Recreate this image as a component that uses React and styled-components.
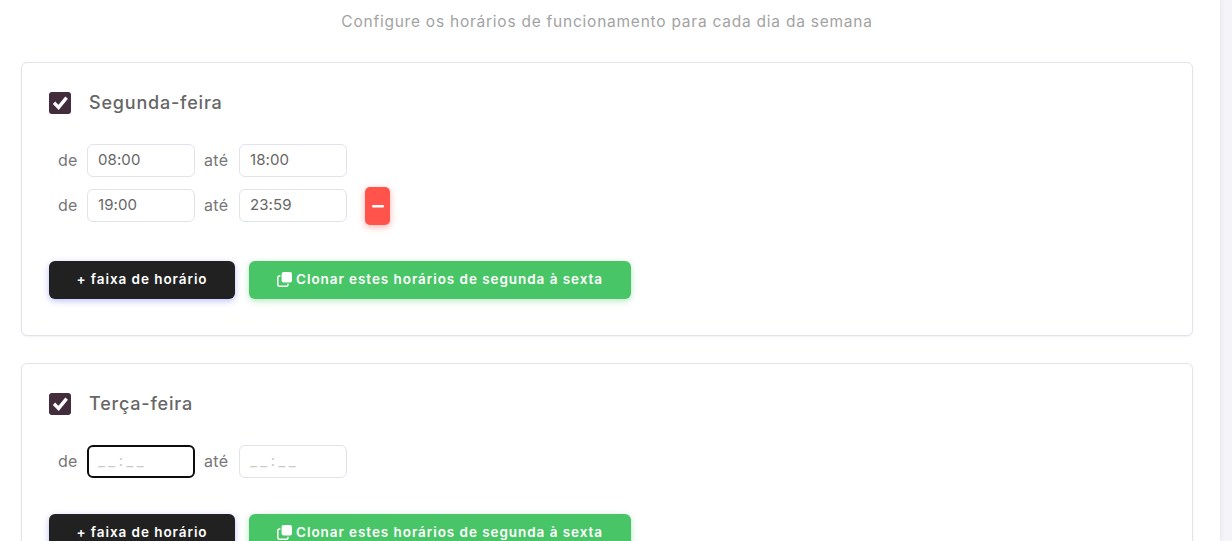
import React from "react";
import styled, { createGlobalStyle } from "styled-components";

const Global = createGlobalStyle`
  html, body { margin: 0; height: 541px; overflow: hidden; background: #f5f5f9; }
  body { font-family: "Inter", "Open Sans", "Liberation Sans", sans-serif; }
  * { box-sizing: border-box; }
`;

const Page = styled.div`
  width: 1221px;
  height: 541px;
  overflow: hidden;
  background: #fff;
  border-right: 1px solid #ebebf1;
  padding: 11px 27px 0 21px;
  box-shadow: 1px 0 3px rgba(230, 230, 238, 0.5);
`;

const Subtitle = styled.p`
  margin: 0 0 29px;
  height: 22px;
  line-height: 22px;
  text-align: center;
  font-size: 15.5px;
  letter-spacing: 0.76px;
  color: #a3a3a3;
`;

const Card = styled.section`
  width: 1172px;
  background: #fff;
  border: 1px solid #e4e3ea;
  border-radius: 6px;
  padding: 29px 27px 36px;
  margin-bottom: 27px;
  box-shadow: 0 1px 2px rgba(225, 225, 235, 0.45);
`;

const Header = styled.div`
  display: flex;
  align-items: center;
  gap: 18px;
  height: 22px;
  margin-bottom: 30px;
`;

const Check = styled.span`
  display: flex;
  width: 22px;
  height: 22px;
  border-radius: 3px;
  background: #432c3b;
`;

const DayTitle = styled.h3`
  margin: 0;
  padding-bottom: 2px;
  font-size: 18px;
  font-weight: 500;
  letter-spacing: 0.8px;
  color: #666;
`;

const Ranges = styled.div`
  display: flex;
  flex-direction: column;
  gap: 10px;
  padding-left: 9px;
`;

const Range = styled.div`
  display: flex;
  align-items: center;
  min-height: 33px;
  padding-bottom: ${(p) => (p.$tall ? 1 : 0)}px;
`;

const Word = styled.span`
  width: ${(p) => p.$w}px;
  padding-left: ${(p) => p.$pad || 0}px;
  padding-bottom: 2px;
  font-size: 16px;
  color: #777;
  letter-spacing: 0.3px;
`;

const TimeInput = styled.input`
  width: 108px;
  height: 33px;
  padding: 0 ${(p) => (p.$focus ? 9 : 10)}px 2px;
  border: ${(p) => (p.$focus ? "2px solid #0c0c0c" : "1px solid #e2e2ea")};
  border-radius: 6px;
  outline: none;
  background: #fff;
  font-family: inherit;
  font-size: 15px;
  letter-spacing: 0.1px;
  color: #666;
  &::placeholder {
    color: #c9c9c9;
    letter-spacing: 3.5px;
  }
`;

const RemoveButton = styled.button`
  display: flex;
  align-items: center;
  justify-content: center;
  width: 25px;
  height: 38px;
  margin: 0 0 -1px 18px;
  padding: 0;
  border: 0;
  border-radius: 5px;
  background: #ff534c;
  box-shadow: 0 2px 7px rgba(255, 83, 76, 0.45);
`;

const Actions = styled.div`
  display: flex;
  gap: 14px;
  margin-top: 36px;
`;

const ActionButton = styled.button`
  display: flex;
  align-items: center;
  justify-content: center;
  gap: 4px;
  width: ${(p) => p.$w}px;
  height: 38px;
  padding: 0 0 2px;
  border: 0;
  border-radius: 6px;
  font-family: inherit;
  font-size: 13.5px;
  font-weight: 600;
  letter-spacing: 0.94px;
  color: #fff;
  background: ${(p) => p.$bg};
  box-shadow: 0 2px 6px ${(p) => p.$glow};
`;

const CheckMark = () => (
  <svg width="22" height="22" viewBox="0 0 22 22" aria-hidden="true">
    <path d="M5 10.8 9.6 15.4 17.6 5.6" fill="none" stroke="#fff" strokeWidth="3.4" />
  </svg>
);

const Minus = () => (
  <svg width="12" height="3" viewBox="0 0 12 3" aria-hidden="true">
    <rect width="12" height="2.4" rx="1" fill="#fff" />
  </svg>
);

const CloneIcon = () => (
  <svg width="15" height="15" viewBox="0 0 15 15" aria-hidden="true">
    <rect x="4.6" y="0" width="10.4" height="10.4" rx="2" fill="#fff" />
    <path
      d="M3.4 4H2.3A1.5 1.5 0 0 0 .8 5.5v7.2a1.5 1.5 0 0 0 1.5 1.5h7.2a1.5 1.5 0 0 0 1.5-1.5v-.9"
      fill="none"
      stroke="#fff"
      strokeWidth="1.5"
    />
  </svg>
);

const days = [
  { name: "Segunda-feira", ranges: [["08:00", "18:00"], ["19:00", "23:59", true]] },
  { name: "Terça-feira", ranges: [["", "", false, true]] },
];

export default function App() {
  return (
    <Page>
      <Global />
      <Subtitle>Configure os horários de funcionamento para cada dia da semana</Subtitle>
      {days.map((day) => (
        <Card key={day.name}>
          <Header>
            <Check><CheckMark /></Check>
            <DayTitle>{day.name}</DayTitle>
          </Header>
          <Ranges>
            {day.ranges.map(([from, to, removable, focus], i) => (
              <Range key={i} $tall={removable}>
                <Word $w={29}>de</Word>
                <TimeInput readOnly value={from} placeholder="__:__" $focus={focus} />
                <Word $w={44} $pad={9}>até</Word>
                <TimeInput readOnly value={to} placeholder="__:__" />
                {removable && <RemoveButton><Minus /></RemoveButton>}
              </Range>
            ))}
          </Ranges>
          <Actions>
            <ActionButton $w={186} $bg="#212121" $glow="rgba(90, 100, 240, 0.4)">+ faixa de horário</ActionButton>
            <ActionButton $w={382} $bg="#48c566" $glow="rgba(72, 197, 102, 0.4)">
              <CloneIcon />
              Clonar estes horários de segunda à sexta
            </ActionButton>
          </Actions>
        </Card>
      ))}
    </Page>
  );
}
